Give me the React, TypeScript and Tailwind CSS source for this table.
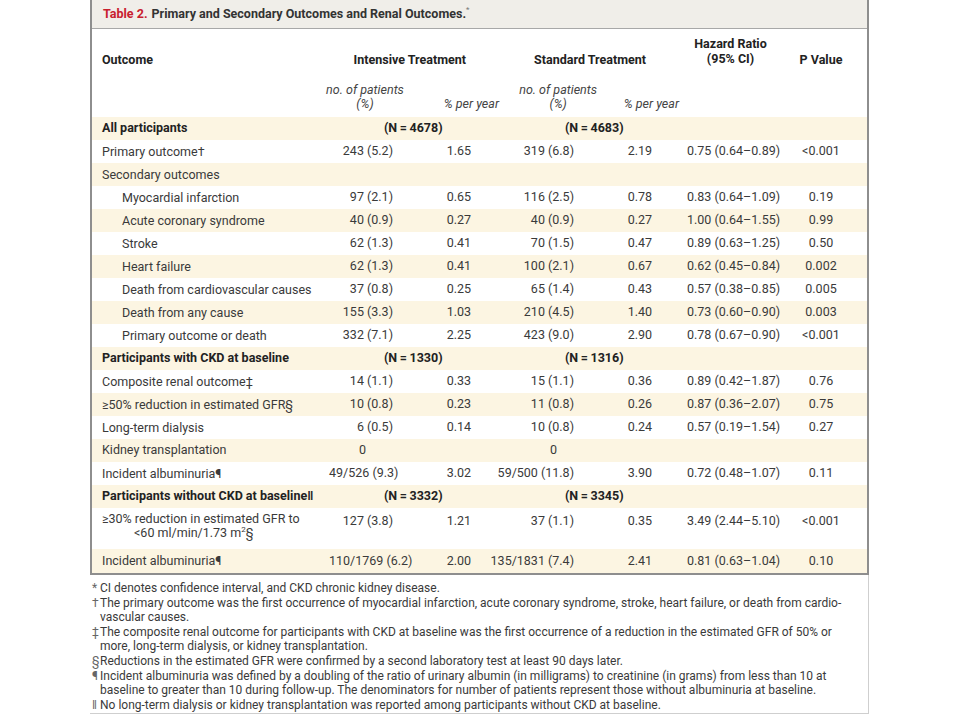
import React from "react";

type Row = {
  label: React.ReactNode;
  indent?: boolean;
  bold?: boolean;
  a?: string;
  b?: string;
  c?: string;
  d?: string;
  hr?: string;
  p?: string;
  cream?: boolean;
  tall?: boolean;
  last?: boolean;
};

const rows: Row[] = [
  { label: "All participants", bold: true, a: "(N\u2009=\u20094678)", c: "(N\u2009=\u20094683)", cream: true },
  { label: "Primary outcome\u2020", a: "243 (5.2)", b: "1.65", c: "319 (6.8)", d: "2.19", hr: "0.75 (0.64\u20130.89)", p: "<0.001" },
  { label: "Secondary outcomes", cream: true },
  { label: "Myocardial infarction", indent: true, a: "97 (2.1)", b: "0.65", c: "116 (2.5)", d: "0.78", hr: "0.83 (0.64\u20131.09)", p: "0.19" },
  { label: "Acute coronary syndrome", indent: true, a: "40 (0.9)", b: "0.27", c: "40 (0.9)", d: "0.27", hr: "1.00 (0.64\u20131.55)", p: "0.99", cream: true },
  { label: "Stroke", indent: true, a: "62 (1.3)", b: "0.41", c: "70 (1.5)", d: "0.47", hr: "0.89 (0.63\u20131.25)", p: "0.50" },
  { label: "Heart failure", indent: true, a: "62 (1.3)", b: "0.41", c: "100 (2.1)", d: "0.67", hr: "0.62 (0.45\u20130.84)", p: "0.002", cream: true },
  { label: "Death from cardiovascular causes", indent: true, a: "37 (0.8)", b: "0.25", c: "65 (1.4)", d: "0.43", hr: "0.57 (0.38\u20130.85)", p: "0.005" },
  { label: "Death from any cause", indent: true, a: "155 (3.3)", b: "1.03", c: "210 (4.5)", d: "1.40", hr: "0.73 (0.60\u20130.90)", p: "0.003", cream: true },
  { label: "Primary outcome or death", indent: true, a: "332 (7.1)", b: "2.25", c: "423 (9.0)", d: "2.90", hr: "0.78 (0.67\u20130.90)", p: "<0.001" },
  { label: "Participants with CKD at baseline", bold: true, a: "(N\u2009=\u20091330)", c: "(N\u2009=\u20091316)", cream: true },
  { label: "Composite renal outcome\u2021", a: "14 (1.1)", b: "0.33", c: "15 (1.1)", d: "0.36", hr: "0.89 (0.42\u20131.87)", p: "0.76" },
  { label: "\u226550% reduction in estimated GFR\u00a7", a: "10 (0.8)", b: "0.23", c: "11 (0.8)", d: "0.26", hr: "0.87 (0.36\u20132.07)", p: "0.75", cream: true },
  { label: "Long-term dialysis", a: "6 (0.5)", b: "0.14", c: "10 (0.8)", d: "0.24", hr: "0.57 (0.19\u20131.54)", p: "0.27" },
  { label: "Kidney transplantation", a: "0", c: "0", cream: true },
  { label: "Incident albuminuria\u00b6", a: "49/526 (9.3)", b: "3.02", c: "59/500 (11.8)", d: "3.90", hr: "0.72 (0.48\u20131.07)", p: "0.11" },
  { label: "Participants without CKD at baseline\u2016", bold: true, a: "(N\u2009=\u20093332)", c: "(N\u2009=\u20093345)", cream: true },
  {
    label: (
      <>
        <div className="h-[14px]">{"\u226530% reduction in estimated GFR to"}</div>
        <div className="h-[14px] pl-[32px]">
          {"<60 ml/min/1.73 m"}
          <span className="relative -top-[5px] text-[8px] leading-none">2</span>
          {"\u00a7"}
        </div>
      </>
    ),
    tall: true,
    a: "127 (3.8)",
    b: "1.21",
    c: "37 (1.1)",
    d: "0.35",
    hr: "3.49 (2.44\u20135.10)",
    p: "<0.001",
  },
  { label: "Incident albuminuria\u00b6", a: "110/1769 (6.2)", b: "2.00", c: "135/1831 (7.4)", d: "2.41", hr: "0.81 (0.63\u20131.04)", p: "0.10", cream: true, last: true },
];

const notes: { sym: string; lines: string[] }[] = [
  { sym: "*", lines: ["CI denotes confidence interval, and CKD chronic kidney disease."] },
  {
    sym: "\u2020",
    lines: [
      "The primary outcome was the first occurrence of myocardial infarction, acute coronary syndrome, stroke, heart failure, or death from cardio-",
      "vascular causes.",
    ],
  },
  {
    sym: "\u2021",
    lines: [
      "The composite renal outcome for participants with CKD at baseline was the first occurrence of a reduction in the estimated GFR of 50% or",
      "more, long-term dialysis, or kidney transplantation.",
    ],
  },
  { sym: "\u00a7", lines: ["Reductions in the estimated GFR were confirmed by a second laboratory test at least 90 days later."] },
  {
    sym: "\u00b6",
    lines: [
      "Incident albuminuria was defined by a doubling of the ratio of urinary albumin (in milligrams) to creatinine (in grams) from less than 10 at",
      "baseline to greater than 10 during follow-up. The denominators for number of patients represent those without albuminuria at baseline.",
    ],
  },
  { sym: "\u2016", lines: ["No long-term dialysis or kidney transplantation was reported among participants without CKD at baseline."] },
];

function DataRow({ row }: { row: Row }) {
  const bg = row.cream ? "bg-[#fcf5e2]" : "bg-white";
  const h = row.tall
    ? "h-[41px] items-start pt-[4px]"
    : row.last
      ? "h-[24px] items-center"
      : "h-[23px] items-center";
  if (row.bold) {
    return (
      <div className={`flex ${h} ${bg} font-bold text-[#222]`}>
        <div className="w-[237px] pl-[10px] whitespace-nowrap">{row.label}</div>
        <div className="w-[142px] pl-[55px] whitespace-nowrap">{row.a}</div>
        <div className="w-[181px] pl-[94px] whitespace-nowrap">{row.c}</div>
      </div>
    );
  }
  return (
    <div className={`flex ${h} ${bg}`}>
      <div className={`w-[237px] whitespace-nowrap leading-[14px] ${row.indent ? "pl-[30px]" : "pl-[10px]"}`}>
        {row.label}
      </div>
      <div className="w-[64px] text-right whitespace-nowrap">{row.a}</div>
      <div className="w-[78px] text-right">{row.b}</div>
      <div className="w-[103px] text-right whitespace-nowrap">{row.c}</div>
      <div className="w-[78px] text-right">{row.d}</div>
      <div className="w-[145px] pl-[35px] whitespace-nowrap">{row.hr}</div>
      <div className="w-[48px] text-center">{row.p}</div>
    </div>
  );
}

function ZeroRow({ row }: { row: Row }) {
  return (
    <div className="flex h-[23px] items-center bg-[#fcf5e2]">
      <div className="w-[237px] pl-[10px] whitespace-nowrap">{row.label}</div>
      <div className="w-[142px] pl-[30px]">{row.a}</div>
      <div className="w-[181px] pl-[79px]">{row.c}</div>
    </div>
  );
}

export default function App() {
  return (
    <div
      className="w-[960px] h-[720px] bg-white text-[#3a3a3a] overflow-hidden"
      style={{ fontFamily: 'Roboto, "Liberation Sans", sans-serif' }}
    >
      <div className="ml-[90px] w-[779px]">
        <div className="border-x-2 border-b-2 border-[#8e8e8e] text-[12.5px]">
          <div className="h-[29px] bg-[#f0eee9] border-b border-[#a8a8a8] flex items-center pl-[11px] font-bold text-[12.5px] text-[#333]">
            <span className="text-[#c8202f] mr-[4px]">Table 2.</span>
            Primary and Secondary Outcomes and Renal Outcomes.
            <span className="relative -top-[4px] text-[8px] font-normal text-[#777]">*</span>
          </div>
          <div className="h-[88px] flex flex-col">
            <div className="flex h-[54px] font-bold text-[#222]">
              <div className="w-[237px] pl-[10px] pt-[22px]">Outcome</div>
              <div className="w-[142px] pt-[22px] text-right pr-[5px]">Intensive Treatment</div>
              <div className="w-[181px] pt-[22px] text-right pr-[6px]">Standard Treatment</div>
              <div className="w-[145px] pt-[7px] pl-[12px] text-center leading-[15px]">
                Hazard Ratio
                <br />
                (95% CI)
              </div>
              <div className="w-[48px] pt-[22px] text-center whitespace-nowrap">P Value</div>
            </div>
            <div className="flex italic text-[#444] leading-[14px]">
              <div className="w-[232px]" />
              <div className="w-[82px] text-center whitespace-nowrap">
                <div className="h-[14px]">no. of patients</div>
                <div className="h-[14px]">(%)</div>
              </div>
              <div className="w-[93px] pt-[14px] text-right whitespace-nowrap">% per year</div>
              <div className="w-[98px] flex justify-end whitespace-nowrap">
                <div className="text-center">
                  <div className="h-[14px]">no. of patients</div>
                  <div className="h-[14px]">(%)</div>
                </div>
              </div>
              <div className="w-[82px] pt-[14px] text-right whitespace-nowrap">% per year</div>
            </div>
          </div>
          {rows.map((r, i) =>
            r.a === "0" ? <ZeroRow key={i} row={r} /> : <DataRow key={i} row={r} />
          )}
        </div>
        <div className="border-r border-b border-[#cfcfcf] pt-[6px] pb-[1px] pl-[2px] text-[12px] leading-[14.6px] text-[#3a3a3a]">
          {notes.map((n, i) => (
            <div key={i} className="flex">
              <div className="w-[8px] shrink-0 text-[#666]">{n.sym}</div>
              <div>
                {n.lines.map((l, j) => (
                  <div key={j} className="whitespace-nowrap">
                    {l}
                  </div>
                ))}
              </div>
            </div>
          ))}
        </div>
      </div>
    </div>
  );
}
